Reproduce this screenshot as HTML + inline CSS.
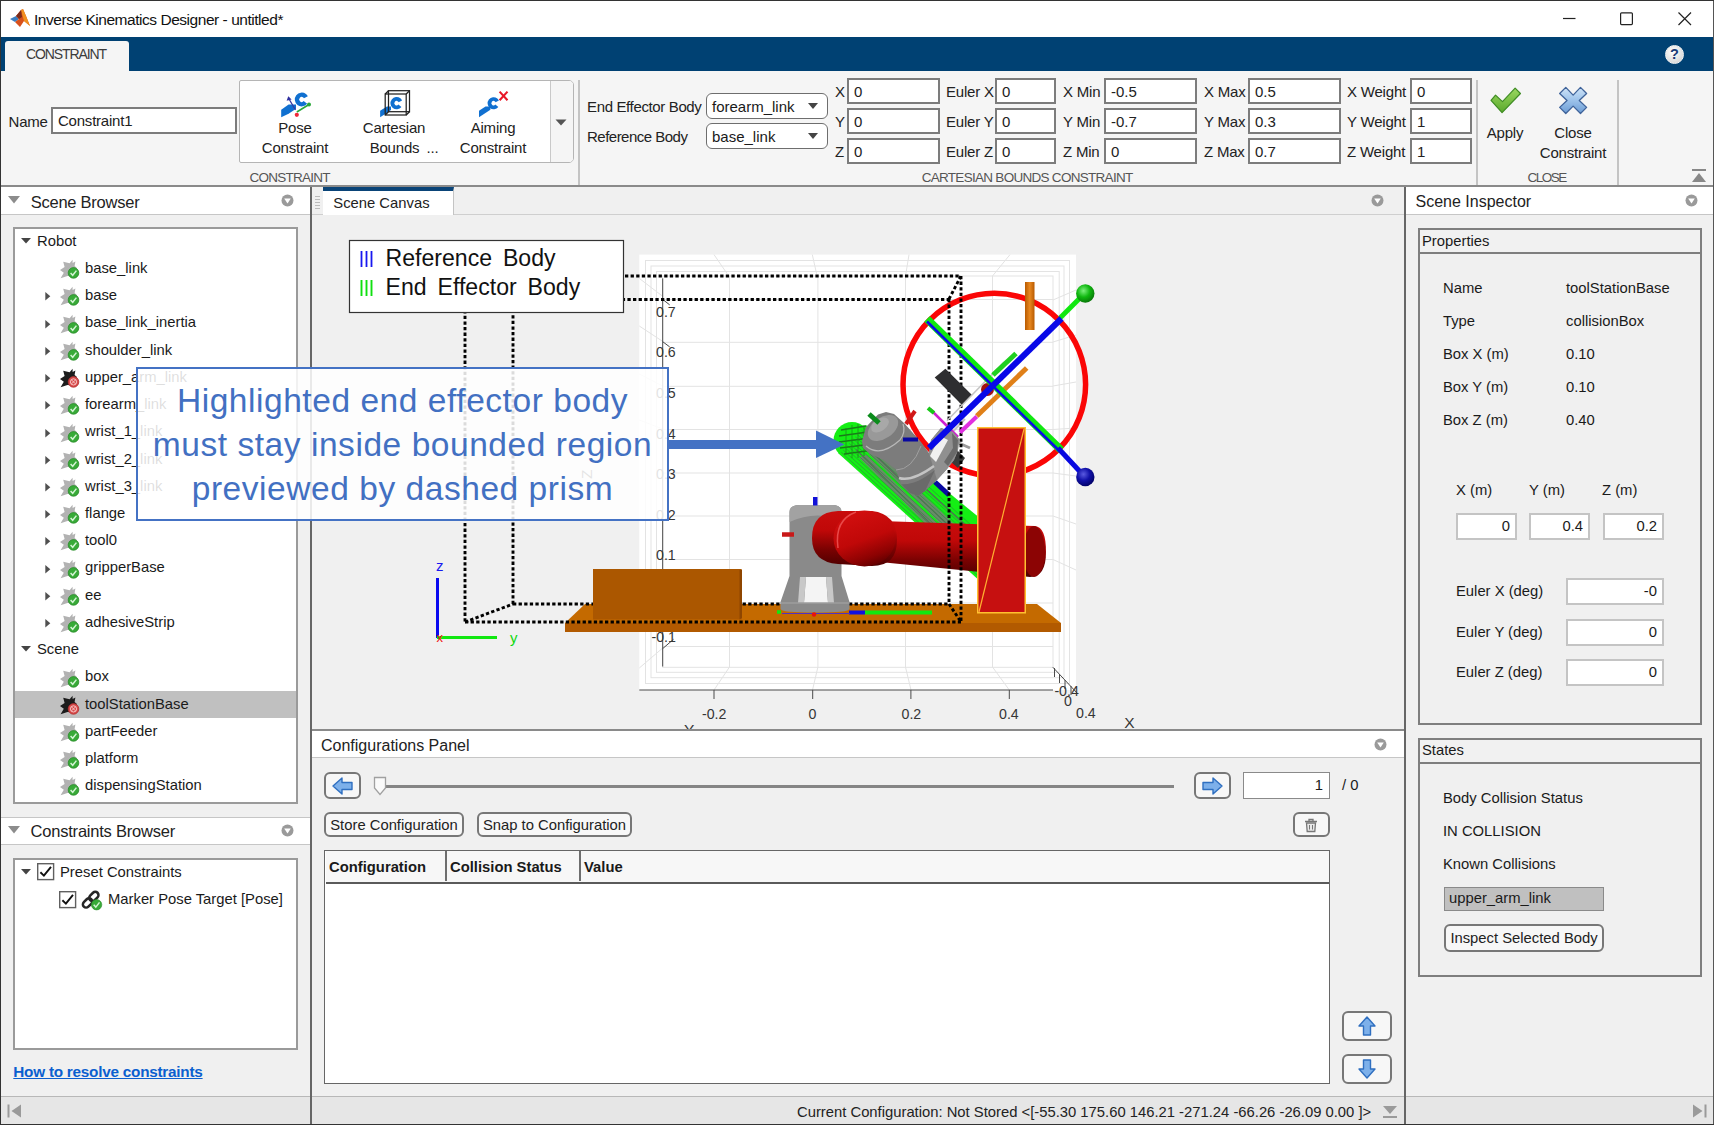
<!DOCTYPE html>
<html><head><meta charset="utf-8"><title>Inverse Kinematics Designer</title>
<style>
*{box-sizing:border-box;margin:0;padding:0}
html,body{width:1714px;height:1125px;overflow:hidden;background:#f0f0f0;font-family:"Liberation Sans",sans-serif;font-size:15px;color:#1a1a1a}
.a{position:absolute}
#win{position:absolute;left:0;top:0;width:1714px;height:1125px;background:#f0f0f0;overflow:hidden}
.ts{font-family:"Liberation Sans",sans-serif;font-size:15px;color:#222;letter-spacing:-0.2px;white-space:nowrap}
.in{position:absolute;background:#fff;border:2px solid #7c7c7c;height:26px;font-size:15px;line-height:23px;padding-left:5px;color:#222;white-space:nowrap;overflow:hidden}
.lb{position:absolute;font-size:15px;line-height:20px;color:#222;white-space:nowrap;letter-spacing:-0.2px}
.sec{position:absolute;font-size:13.5px;color:#555;letter-spacing:-0.2px;white-space:nowrap}
.dd{position:absolute;background:#fff;border:1.5px solid #6e6e6e;border-radius:6px;height:26px;font-size:15px;line-height:26px;padding-left:5px;white-space:nowrap}
.hdr{position:absolute;background:#fff;font-size:16px;line-height:24px;color:#222;white-space:nowrap}
.tree{position:absolute;background:#fff;border:2px solid #9a9a9a}
.ti{position:absolute;height:27px;font-size:14.8px;line-height:27px;white-space:nowrap}
.btn{position:absolute;background:#f7f7f7;border:2px solid #777;border-radius:6px;font-size:14.8px;text-align:center;white-space:nowrap;color:#222}
.pl{position:absolute;font-size:14.8px;line-height:18px;color:#1a1a1a;white-space:nowrap}
.pin{position:absolute;background:#fff;border:2px solid #c4c4c4;font-size:14.8px;text-align:right;padding-right:5px;color:#1a1a1a}
</style></head><body><div id="win">
<!-- TITLE BAR -->
<div class="a" style="left:0;top:0;width:1714px;height:37px;background:#fff"></div>
<div class="a" id="title" style="letter-spacing:-0.464px;left:34.0px;top:9.600px;font-size:15.5px;line-height:20px;color:#111;white-space:nowrap">Inverse Kinematics Designer - untitled*</div>
<!-- BLUE BAND -->
<div class="a" style="left:0;top:37px;width:1714px;height:35px;background:#004173"></div>
<div class="a" style="left:5px;top:41px;width:124px;height:31px;background:#f5f5f5;border-radius:3px 3px 0 0"></div>
<div class="a" id="tabc" style="letter-spacing:-1.100px;left:26.0px;top:44.800px;font-size:14px;line-height:18px;color:#3c3c3c;">CONSTRAINT</div>
<!-- TOOLSTRIP -->
<div class="a" style="left:0;top:71px;width:1714px;height:115px;background:#f5f5f5"></div>
<div class="a" style="left:0;top:185px;width:1714px;height:2px;background:#8a8a8a"></div>
<div id="toolstrip">
<div class="lb" style="left:8.500px;top:111.700px">Name</div>
<div class="in" style="letter-spacing:-0.220px;left:51px;top:107px;width:186px;height:27px;line-height:24px">Constraint1</div>
<!-- gallery -->
<div class="a" style="left:239px;top:80px;width:335px;height:83px;background:#fff;border:1.5px solid #b5b5b5;border-radius:2px 5px 5px 2px"></div>
<div class="a" style="left:550px;top:81px;width:23px;height:81px;background:#f5f5f5;border-left:1.5px solid #c9c9c9;border-radius:0 4px 4px 0"></div>
<svg class="a" style="left:555px;top:119px" width="12" height="7"><path d="M0.5 0.5 L11.5 0.5 L6 6.5 Z" fill="#555"/></svg>
<div class="lb gl" style="left:245px;top:118px;width:100px;text-align:center">Pose</div>
<div class="lb gl" style="left:245px;top:138px;width:100px;text-align:center">Constraint</div>
<div class="lb gl" style="left:344px;top:118px;width:100px;text-align:center">Cartesian</div>
<div class="lb gl" style="left:344.500px;top:138px;width:100px;text-align:center">Bounds</div><div class="lb" style="left:426.500px;top:138px">...</div>
<div class="lb gl" style="left:443px;top:118px;width:100px;text-align:center">Aiming</div>
<div class="lb gl" style="left:443px;top:138px;width:100px;text-align:center">Constraint</div>
<!-- gallery icons -->
<svg class="a" style="left:275px;top:86px" width="44" height="36" viewBox="275 86 44 36">
<path d="M281.200 109.800 L288.600 104.500 L296 104.500 L296 108.800 L288.600 113.800 L281.200 117.200 Z" fill="#1070d0"/>
<circle cx="301.7" cy="99.5" r="4.7" fill="none" stroke="#1070d0" stroke-width="4.4" stroke-dasharray="23.62 5.91" transform="rotate(38 301.7 99.5)"/>
<path d="M296.800 112 L309 104.500" stroke="#28a838" stroke-width="1.500"/><circle cx="309" cy="104.500" r="2" fill="#28a838"/>
<path d="M295.500 110 L289 99" stroke="#3838a0" stroke-width="1.300"/><path d="M286.600 100.800 L288.300 96.200 L291.600 99.600 Z" fill="#3030a0"/>
<circle cx="296.800" cy="114.800" r="2.100" fill="#f02838"/>
</svg>
<svg class="a" style="left:374px;top:86px" width="44" height="36" viewBox="374 86 44 36">
<path d="M380.100 110.800 L387 106.500 L391 106.500 L391 110 L386 113.500 L380.100 117.200 Z" fill="#1070d0"/>
<circle cx="396.6" cy="103.2" r="4.2" fill="none" stroke="#1070d0" stroke-width="3.9" stroke-dasharray="21.11 5.28" transform="rotate(38 396.6 103.2)"/>
<g fill="none" stroke="#222" stroke-width="1.250"><rect x="385.200" y="94" width="21" height="21"/><rect x="388.500" y="90.700" width="21" height="21"/><path d="M385.200 94 L388.500 90.700 M406.200 94 L409.500 90.700 M406.200 115 L409.500 111.700 M385.200 115 L388.500 111.700"/></g>
</svg>
<svg class="a" style="left:473px;top:86px" width="44" height="36" viewBox="473 86 44 36">
<path d="M479 110.800 L485.500 106.500 L490.400 106.500 L490.400 109.800 L484.700 113.500 L479 117.200 Z" fill="#1070d0"/>
<circle cx="493.6" cy="103.2" r="4.1" fill="none" stroke="#1070d0" stroke-width="3.8" stroke-dasharray="20.61 5.15" transform="rotate(38 493.6 103.2)"/>
<path d="M499.600 91.600 L507.500 100.300 M507.500 91.600 L499.600 100.300" stroke="#e81828" stroke-width="2.100"/>
</svg>
<div class="sec" style="letter-spacing:-0.745px;left:249.4px;top:170px">CONSTRAINT</div>
<div class="a" style="left:578px;top:80px;width:2px;height:105px;background:#c4c4c4"></div>
<!-- body selectors -->
<div class="lb" style="letter-spacing:-0.361px;left:587.0px;top:97px">End Effector Body</div>
<div class="lb" style="letter-spacing:-0.513px;left:587.0px;top:127px">Reference Body</div>
<div class="dd" style="left:706px;top:93px;width:122px">forearm_link</div>
<div class="dd" style="left:706px;top:123px;width:122px">base_link</div>
<svg class="a" style="left:808px;top:103px" width="10" height="6"><path d="M0 0 L10 0 L5 6 Z" fill="#444"/></svg>
<svg class="a" style="left:808px;top:133px" width="10" height="6"><path d="M0 0 L10 0 L5 6 Z" fill="#444"/></svg>
<div class="lb" style="left:835px;top:82px">X</div>
<div class="in" style="left:847px;top:77.7px;width:93px;height:26.600px">0</div>
<div class="lb" style="left:946px;top:82px">Euler X</div>
<div class="in" style="left:995px;top:77.7px;width:61px;height:26.600px">0</div>
<div class="lb" style="left:1063px;top:82px">X Min</div>
<div class="in" style="left:1104px;top:77.7px;width:93px;height:26.600px">-0.5</div>
<div class="lb" style="left:1204px;top:82px">X Max</div>
<div class="in" style="left:1248px;top:77.7px;width:93px;height:26.600px">0.5</div>
<div class="lb" style="left:1347px;top:82px">X Weight</div>
<div class="in" style="left:1410px;top:77.7px;width:62px;height:26.600px">0</div>
<div class="lb" style="left:835px;top:112px">Y</div>
<div class="in" style="left:847px;top:107.7px;width:93px;height:26.600px">0</div>
<div class="lb" style="left:946px;top:112px">Euler Y</div>
<div class="in" style="left:995px;top:107.7px;width:61px;height:26.600px">0</div>
<div class="lb" style="left:1063px;top:112px">Y Min</div>
<div class="in" style="left:1104px;top:107.7px;width:93px;height:26.600px">-0.7</div>
<div class="lb" style="left:1204px;top:112px">Y Max</div>
<div class="in" style="left:1248px;top:107.7px;width:93px;height:26.600px">0.3</div>
<div class="lb" style="left:1347px;top:112px">Y Weight</div>
<div class="in" style="left:1410px;top:107.7px;width:62px;height:26.600px">1</div>
<div class="lb" style="left:835px;top:142px">Z</div>
<div class="in" style="left:847px;top:137.7px;width:93px;height:26.600px">0</div>
<div class="lb" style="left:946px;top:142px">Euler Z</div>
<div class="in" style="left:995px;top:137.7px;width:61px;height:26.600px">0</div>
<div class="lb" style="left:1063px;top:142px">Z Min</div>
<div class="in" style="left:1104px;top:137.7px;width:93px;height:26.600px">0</div>
<div class="lb" style="left:1204px;top:142px">Z Max</div>
<div class="in" style="left:1248px;top:137.7px;width:93px;height:26.600px">0.7</div>
<div class="lb" style="left:1347px;top:142px">Z Weight</div>
<div class="in" style="left:1410px;top:137.7px;width:62px;height:26.600px">1</div>
<div class="sec" style="letter-spacing:-0.712px;left:921.7px;top:170px">CARTESIAN BOUNDS CONSTRAINT</div>
<div class="a" style="left:1476px;top:80px;width:2px;height:105px;background:#c4c4c4"></div>
<div class="a" style="left:1617px;top:80px;width:2px;height:105px;background:#c4c4c4"></div>
<div class="lb" style="left:1465px;top:123px;width:80px;text-align:center">Apply</div>
<div class="lb" style="left:1533px;top:123px;width:80px;text-align:center">Close</div>
<div class="lb" style="left:1533px;top:143px;width:80px;text-align:center">Constraint</div>
<div class="sec" style="letter-spacing:-1.516px;left:1527.6px;top:170px">CLOSE</div>
<svg class="a" style="left:1489px;top:87px" width="34" height="30" viewBox="0 0 34 30"><defs><linearGradient id="gCk" x1="0" x2="0" y1="0" y2="1"><stop offset="0" stop-color="#9ad860"/><stop offset="1" stop-color="#5aa82c"/></linearGradient></defs><path d="M2.03 13.42 L6.52 8.11 L13.47 14.65 L26.13 1.17 L31.44 6.48 L13.06 25.68 Z" fill="url(#gCk)" stroke="#3f8c24" stroke-width="1.200" stroke-linejoin="round"/></svg>
<svg class="a" style="left:1557px;top:86px" width="34" height="30" viewBox="0 0 34 30"><defs><linearGradient id="gXx" x1="0" x2="0" y1="0" y2="1"><stop offset="0" stop-color="#cfe4f8"/><stop offset="0.5" stop-color="#9cc2ea"/><stop offset="1" stop-color="#6c9cd4"/></linearGradient></defs><path d="M8.78 1.35 L16.14 9.11 L23.49 1.35 L29.62 7.48 L22.26 14.42 L29.62 21.37 L23.49 27.50 L16.14 20.14 L8.78 27.50 L2.66 21.37 L10.01 14.42 L2.66 7.48 Z" fill="url(#gXx)" stroke="#3f639a" stroke-width="1.300" stroke-linejoin="round"/></svg>
<svg class="a" style="left:1692px;top:169px" width="14" height="13" viewBox="0 0 14 13"><rect x="0" y="0" width="14" height="2" fill="#888"/><path d="M7 4 L14 13 L0 13 Z" fill="#888"/></svg>
<svg class="a" style="left:1560px;top:8px" width="140" height="22" viewBox="0 0 140 22"><path d="M3 10.500 L15.500 10.500" stroke="#222" stroke-width="1.200"/><rect x="60.600" y="4.800" width="11.800" height="11.800" rx="1" fill="none" stroke="#222" stroke-width="1.200"/><path d="M118.500 4.500 L131 17 M131 4.500 L118.500 17" stroke="#222" stroke-width="1.200"/></svg>
<div class="a" style="left:1665px;top:44.500px;width:19px;height:19px;border-radius:9.500px;background:radial-gradient(circle at 40% 35%,#fff,#dcdcdc 70%,#b8b8c8);border:1px solid #f4f4f4;color:#1a3c78;font-weight:bold;font-size:14.500px;line-height:17px;text-align:center">?</div>
<svg class="a" style="left:9px;top:8px" width="22" height="20" viewBox="0 0 22 20"><path d="M1 11 L7 8 L10 11 L6 14 Z" fill="#3a7cc0"/><path d="M7 8 L12 2 L14 1 L17 8 L21 18 L15 13 L11 19 L6 14 L10 11 Z" fill="#d8501c"/><path d="M12 2 L14 1 L17 8 L21 18 L15 13 Z" fill="#f09020"/><path d="M7 8 L12 2 L13 9 L10 11Z" fill="#7a2a1a"/></svg>
</div>
<!-- LEFT -->
<div id="left">
<div class="a" style="left:1px;top:187px;width:309px;height:910px;background:#f0f0f0"></div>
<div class="a" style="left:310.200px;top:187px;width:1.600px;height:938px;background:#666"></div>
<div class="hdr" style="left:1px;top:187px;width:309px;height:28px;border-bottom:1.5px solid #c6c6c6"></div>
<svg class="a" style="left:8px;top:196px" width="12" height="8"><path d="M0 0 L12 0 L6 7.500 Z" fill="#8c8c8c"/></svg>
<div class="a" id="sbh" style="letter-spacing:-0.245px;left:30.7px;top:191.600px;font-size:16.5px;line-height:20px;color:#222;white-space:nowrap">Scene Browser</div>
<svg class="a" style="left:281px;top:194px" width="13" height="13" viewBox="0 0 13 13"><circle cx="6.5" cy="6.5" r="6" fill="#9a9a9a"/><path d="M3.200 4.500 L9.800 4.500 L6.500 9.500 Z" fill="#fff"/></svg>
<div class="tree" style="left:13px;top:227px;width:285px;height:577px"></div>
<svg class="a" style="left:21px;top:238px" width="10" height="6"><path d="M0 0 L10 0 L5 5.500 Z" fill="#444"/></svg>
<div class="ti" style="left:37px;top:227.7px">Robot</div>
<svg class="a" style="left:59px;top:257px" width="22" height="22" viewBox="0 0 22 22"><path d="M13.600 2.800 L10.600 6.200 L4.200 4.800 L5.600 10 L1 13 L4.800 15.800 L1.600 21.200 L8.500 19 L14 19.500 L18 11 L15.600 9 L16.400 4.400 L13.600 6 Z" fill="#b2b2b2"/><circle cx="14.500" cy="15.900" r="5.300" fill="#38aa38" stroke="#2a8c2a" stroke-width="0.800"/><path d="M11.600 16 L13.700 18.300 L17.400 13.600" fill="none" stroke="#d4f4d4" stroke-width="1.500"/></svg>
<div class="ti" style="left:85px;top:254.9px">base_link</div>
<svg class="a" style="left:45px;top:291.5px" width="6" height="9"><path d="M0.300 0 L5.300 4.300 L0.300 8.600 Z" fill="#505050"/></svg>
<svg class="a" style="left:59px;top:284px" width="22" height="22" viewBox="0 0 22 22"><path d="M13.600 2.800 L10.600 6.200 L4.200 4.800 L5.600 10 L1 13 L4.800 15.800 L1.600 21.200 L8.500 19 L14 19.500 L18 11 L15.600 9 L16.400 4.400 L13.600 6 Z" fill="#b2b2b2"/><circle cx="14.500" cy="15.900" r="5.300" fill="#38aa38" stroke="#2a8c2a" stroke-width="0.800"/><path d="M11.600 16 L13.700 18.300 L17.400 13.600" fill="none" stroke="#d4f4d4" stroke-width="1.500"/></svg>
<div class="ti" style="left:85px;top:282.1px">base</div>
<svg class="a" style="left:45px;top:319.5px" width="6" height="9"><path d="M0.300 0 L5.300 4.300 L0.300 8.600 Z" fill="#505050"/></svg>
<svg class="a" style="left:59px;top:312px" width="22" height="22" viewBox="0 0 22 22"><path d="M13.600 2.800 L10.600 6.200 L4.200 4.800 L5.600 10 L1 13 L4.800 15.800 L1.600 21.200 L8.500 19 L14 19.500 L18 11 L15.600 9 L16.400 4.400 L13.600 6 Z" fill="#b2b2b2"/><circle cx="14.500" cy="15.900" r="5.300" fill="#38aa38" stroke="#2a8c2a" stroke-width="0.800"/><path d="M11.600 16 L13.700 18.300 L17.400 13.600" fill="none" stroke="#d4f4d4" stroke-width="1.500"/></svg>
<div class="ti" style="left:85px;top:309.4px">base_link_inertia</div>
<svg class="a" style="left:45px;top:346.5px" width="6" height="9"><path d="M0.300 0 L5.300 4.300 L0.300 8.600 Z" fill="#505050"/></svg>
<svg class="a" style="left:59px;top:339px" width="22" height="22" viewBox="0 0 22 22"><path d="M13.600 2.800 L10.600 6.200 L4.200 4.800 L5.600 10 L1 13 L4.800 15.800 L1.600 21.200 L8.500 19 L14 19.500 L18 11 L15.600 9 L16.400 4.400 L13.600 6 Z" fill="#b2b2b2"/><circle cx="14.500" cy="15.900" r="5.300" fill="#38aa38" stroke="#2a8c2a" stroke-width="0.800"/><path d="M11.600 16 L13.700 18.300 L17.400 13.600" fill="none" stroke="#d4f4d4" stroke-width="1.500"/></svg>
<div class="ti" style="left:85px;top:336.6px">shoulder_link</div>
<svg class="a" style="left:45px;top:373.5px" width="6" height="9"><path d="M0.300 0 L5.300 4.300 L0.300 8.600 Z" fill="#505050"/></svg>
<svg class="a" style="left:59px;top:366px" width="22" height="22" viewBox="0 0 22 22"><path d="M13.600 2.800 L10.600 6.200 L4.200 4.800 L5.600 10 L1 13 L4.800 15.800 L1.600 21.200 L8.500 19 L14 19.500 L18 11 L15.600 9 L16.400 4.400 L13.600 6 Z" fill="#1c1c1c"/><circle cx="14.500" cy="15.900" r="5.300" fill="#d84a4a" stroke="#b03030" stroke-width="0.800"/><circle cx="14.500" cy="15.900" r="3.100" fill="none" stroke="#f8d0d0" stroke-width="0.900"/><path d="M12.600 14 L16.400 17.800 M16.400 14 L12.600 17.800" stroke="#f8d0d0" stroke-width="0.900"/></svg>
<div class="ti" style="left:85px;top:363.8px">upper_arm_link</div>
<svg class="a" style="left:45px;top:400.5px" width="6" height="9"><path d="M0.300 0 L5.300 4.300 L0.300 8.600 Z" fill="#505050"/></svg>
<svg class="a" style="left:59px;top:393px" width="22" height="22" viewBox="0 0 22 22"><path d="M13.600 2.800 L10.600 6.200 L4.200 4.800 L5.600 10 L1 13 L4.800 15.800 L1.600 21.200 L8.500 19 L14 19.500 L18 11 L15.600 9 L16.400 4.400 L13.600 6 Z" fill="#b2b2b2"/><circle cx="14.500" cy="15.900" r="5.300" fill="#38aa38" stroke="#2a8c2a" stroke-width="0.800"/><path d="M11.600 16 L13.700 18.300 L17.400 13.600" fill="none" stroke="#d4f4d4" stroke-width="1.500"/></svg>
<div class="ti" style="left:85px;top:391.1px">forearm_link</div>
<svg class="a" style="left:45px;top:428.5px" width="6" height="9"><path d="M0.300 0 L5.300 4.300 L0.300 8.600 Z" fill="#505050"/></svg>
<svg class="a" style="left:59px;top:421px" width="22" height="22" viewBox="0 0 22 22"><path d="M13.600 2.800 L10.600 6.200 L4.200 4.800 L5.600 10 L1 13 L4.800 15.800 L1.600 21.200 L8.500 19 L14 19.500 L18 11 L15.600 9 L16.400 4.400 L13.600 6 Z" fill="#b2b2b2"/><circle cx="14.500" cy="15.900" r="5.300" fill="#38aa38" stroke="#2a8c2a" stroke-width="0.800"/><path d="M11.600 16 L13.700 18.300 L17.400 13.600" fill="none" stroke="#d4f4d4" stroke-width="1.500"/></svg>
<div class="ti" style="left:85px;top:418.3px">wrist_1_link</div>
<svg class="a" style="left:45px;top:455.5px" width="6" height="9"><path d="M0.300 0 L5.300 4.300 L0.300 8.600 Z" fill="#505050"/></svg>
<svg class="a" style="left:59px;top:448px" width="22" height="22" viewBox="0 0 22 22"><path d="M13.600 2.800 L10.600 6.200 L4.200 4.800 L5.600 10 L1 13 L4.800 15.800 L1.600 21.200 L8.500 19 L14 19.500 L18 11 L15.600 9 L16.400 4.400 L13.600 6 Z" fill="#b2b2b2"/><circle cx="14.500" cy="15.900" r="5.300" fill="#38aa38" stroke="#2a8c2a" stroke-width="0.800"/><path d="M11.600 16 L13.700 18.300 L17.400 13.600" fill="none" stroke="#d4f4d4" stroke-width="1.500"/></svg>
<div class="ti" style="left:85px;top:445.5px">wrist_2_link</div>
<svg class="a" style="left:45px;top:482.5px" width="6" height="9"><path d="M0.300 0 L5.300 4.300 L0.300 8.600 Z" fill="#505050"/></svg>
<svg class="a" style="left:59px;top:475px" width="22" height="22" viewBox="0 0 22 22"><path d="M13.600 2.800 L10.600 6.200 L4.200 4.800 L5.600 10 L1 13 L4.800 15.800 L1.600 21.200 L8.500 19 L14 19.500 L18 11 L15.600 9 L16.400 4.400 L13.600 6 Z" fill="#b2b2b2"/><circle cx="14.500" cy="15.900" r="5.300" fill="#38aa38" stroke="#2a8c2a" stroke-width="0.800"/><path d="M11.600 16 L13.700 18.300 L17.400 13.600" fill="none" stroke="#d4f4d4" stroke-width="1.500"/></svg>
<div class="ti" style="left:85px;top:472.7px">wrist_3_link</div>
<svg class="a" style="left:45px;top:509.5px" width="6" height="9"><path d="M0.300 0 L5.300 4.300 L0.300 8.600 Z" fill="#505050"/></svg>
<svg class="a" style="left:59px;top:502px" width="22" height="22" viewBox="0 0 22 22"><path d="M13.600 2.800 L10.600 6.200 L4.200 4.800 L5.600 10 L1 13 L4.800 15.800 L1.600 21.200 L8.500 19 L14 19.500 L18 11 L15.600 9 L16.400 4.400 L13.600 6 Z" fill="#b2b2b2"/><circle cx="14.500" cy="15.900" r="5.300" fill="#38aa38" stroke="#2a8c2a" stroke-width="0.800"/><path d="M11.600 16 L13.700 18.300 L17.400 13.600" fill="none" stroke="#d4f4d4" stroke-width="1.500"/></svg>
<div class="ti" style="left:85px;top:500px">flange</div>
<svg class="a" style="left:45px;top:536.5px" width="6" height="9"><path d="M0.300 0 L5.300 4.300 L0.300 8.600 Z" fill="#505050"/></svg>
<svg class="a" style="left:59px;top:529px" width="22" height="22" viewBox="0 0 22 22"><path d="M13.600 2.800 L10.600 6.200 L4.200 4.800 L5.600 10 L1 13 L4.800 15.800 L1.600 21.200 L8.500 19 L14 19.500 L18 11 L15.600 9 L16.400 4.400 L13.600 6 Z" fill="#b2b2b2"/><circle cx="14.500" cy="15.900" r="5.300" fill="#38aa38" stroke="#2a8c2a" stroke-width="0.800"/><path d="M11.600 16 L13.700 18.300 L17.400 13.600" fill="none" stroke="#d4f4d4" stroke-width="1.500"/></svg>
<div class="ti" style="left:85px;top:527.2px">tool0</div>
<svg class="a" style="left:45px;top:564.5px" width="6" height="9"><path d="M0.300 0 L5.300 4.300 L0.300 8.600 Z" fill="#505050"/></svg>
<svg class="a" style="left:59px;top:557px" width="22" height="22" viewBox="0 0 22 22"><path d="M13.600 2.800 L10.600 6.200 L4.200 4.800 L5.600 10 L1 13 L4.800 15.800 L1.600 21.200 L8.500 19 L14 19.500 L18 11 L15.600 9 L16.400 4.400 L13.600 6 Z" fill="#b2b2b2"/><circle cx="14.500" cy="15.900" r="5.300" fill="#38aa38" stroke="#2a8c2a" stroke-width="0.800"/><path d="M11.600 16 L13.700 18.300 L17.400 13.600" fill="none" stroke="#d4f4d4" stroke-width="1.500"/></svg>
<div class="ti" style="left:85px;top:554.4px">gripperBase</div>
<svg class="a" style="left:45px;top:591.5px" width="6" height="9"><path d="M0.300 0 L5.300 4.300 L0.300 8.600 Z" fill="#505050"/></svg>
<svg class="a" style="left:59px;top:584px" width="22" height="22" viewBox="0 0 22 22"><path d="M13.600 2.800 L10.600 6.200 L4.200 4.800 L5.600 10 L1 13 L4.800 15.800 L1.600 21.200 L8.500 19 L14 19.500 L18 11 L15.600 9 L16.400 4.400 L13.600 6 Z" fill="#b2b2b2"/><circle cx="14.500" cy="15.900" r="5.300" fill="#38aa38" stroke="#2a8c2a" stroke-width="0.800"/><path d="M11.600 16 L13.700 18.300 L17.400 13.600" fill="none" stroke="#d4f4d4" stroke-width="1.500"/></svg>
<div class="ti" style="left:85px;top:581.6px">ee</div>
<svg class="a" style="left:45px;top:618.5px" width="6" height="9"><path d="M0.300 0 L5.300 4.300 L0.300 8.600 Z" fill="#505050"/></svg>
<svg class="a" style="left:59px;top:611px" width="22" height="22" viewBox="0 0 22 22"><path d="M13.600 2.800 L10.600 6.200 L4.200 4.800 L5.600 10 L1 13 L4.800 15.800 L1.600 21.200 L8.500 19 L14 19.500 L18 11 L15.600 9 L16.400 4.400 L13.600 6 Z" fill="#b2b2b2"/><circle cx="14.500" cy="15.900" r="5.300" fill="#38aa38" stroke="#2a8c2a" stroke-width="0.800"/><path d="M11.600 16 L13.700 18.300 L17.400 13.600" fill="none" stroke="#d4f4d4" stroke-width="1.500"/></svg>
<div class="ti" style="left:85px;top:608.9px">adhesiveStrip</div>
<svg class="a" style="left:21px;top:646px" width="10" height="6"><path d="M0 0 L10 0 L5 5.500 Z" fill="#444"/></svg>
<div class="ti" style="left:37px;top:636.1px">Scene</div>
<svg class="a" style="left:59px;top:666px" width="22" height="22" viewBox="0 0 22 22"><path d="M13.600 2.800 L10.600 6.200 L4.200 4.800 L5.600 10 L1 13 L4.800 15.800 L1.600 21.200 L8.500 19 L14 19.500 L18 11 L15.600 9 L16.400 4.400 L13.600 6 Z" fill="#b2b2b2"/><circle cx="14.500" cy="15.900" r="5.300" fill="#38aa38" stroke="#2a8c2a" stroke-width="0.800"/><path d="M11.600 16 L13.700 18.300 L17.400 13.600" fill="none" stroke="#d4f4d4" stroke-width="1.500"/></svg>
<div class="ti" style="left:85px;top:663.3px">box</div>
<div class="a" style="left:15px;top:691px;width:281px;height:27px;background:#c0c0c0"></div>
<svg class="a" style="left:59px;top:693px" width="22" height="22" viewBox="0 0 22 22"><path d="M13.600 2.800 L10.600 6.200 L4.200 4.800 L5.600 10 L1 13 L4.800 15.800 L1.600 21.200 L8.500 19 L14 19.500 L18 11 L15.600 9 L16.400 4.400 L13.600 6 Z" fill="#1c1c1c"/><circle cx="14.500" cy="15.900" r="5.300" fill="#d84a4a" stroke="#b03030" stroke-width="0.800"/><circle cx="14.500" cy="15.900" r="3.100" fill="none" stroke="#f8d0d0" stroke-width="0.900"/><path d="M12.600 14 L16.400 17.800 M16.400 14 L12.600 17.800" stroke="#f8d0d0" stroke-width="0.900"/></svg>
<div class="ti" style="left:85px;top:690.5px">toolStationBase</div>
<svg class="a" style="left:59px;top:720px" width="22" height="22" viewBox="0 0 22 22"><path d="M13.600 2.800 L10.600 6.200 L4.200 4.800 L5.600 10 L1 13 L4.800 15.800 L1.600 21.200 L8.500 19 L14 19.500 L18 11 L15.600 9 L16.400 4.400 L13.600 6 Z" fill="#b2b2b2"/><circle cx="14.500" cy="15.900" r="5.300" fill="#38aa38" stroke="#2a8c2a" stroke-width="0.800"/><path d="M11.600 16 L13.700 18.300 L17.400 13.600" fill="none" stroke="#d4f4d4" stroke-width="1.500"/></svg>
<div class="ti" style="left:85px;top:717.7px">partFeeder</div>
<svg class="a" style="left:59px;top:747px" width="22" height="22" viewBox="0 0 22 22"><path d="M13.600 2.800 L10.600 6.200 L4.200 4.800 L5.600 10 L1 13 L4.800 15.800 L1.600 21.200 L8.500 19 L14 19.500 L18 11 L15.600 9 L16.400 4.400 L13.600 6 Z" fill="#b2b2b2"/><circle cx="14.500" cy="15.900" r="5.300" fill="#38aa38" stroke="#2a8c2a" stroke-width="0.800"/><path d="M11.600 16 L13.700 18.300 L17.400 13.600" fill="none" stroke="#d4f4d4" stroke-width="1.500"/></svg>
<div class="ti" style="left:85px;top:745px">platform</div>
<svg class="a" style="left:59px;top:774px" width="22" height="22" viewBox="0 0 22 22"><path d="M13.600 2.800 L10.600 6.200 L4.200 4.800 L5.600 10 L1 13 L4.800 15.800 L1.600 21.200 L8.500 19 L14 19.500 L18 11 L15.600 9 L16.400 4.400 L13.600 6 Z" fill="#b2b2b2"/><circle cx="14.500" cy="15.900" r="5.300" fill="#38aa38" stroke="#2a8c2a" stroke-width="0.800"/><path d="M11.600 16 L13.700 18.300 L17.400 13.600" fill="none" stroke="#d4f4d4" stroke-width="1.500"/></svg>
<div class="ti" style="left:85px;top:772.2px">dispensingStation</div>
<div class="hdr" style="left:1px;top:817px;width:309px;height:28px;border-top:1.5px solid #c6c6c6;border-bottom:1.5px solid #c6c6c6"></div>
<svg class="a" style="left:8px;top:826px" width="12" height="8"><path d="M0 0 L12 0 L6 7.500 Z" fill="#8c8c8c"/></svg>
<div class="a" id="cbh" style="letter-spacing:-0.219px;left:30.6px;top:821px;font-size:16.5px;line-height:20px;color:#222;white-space:nowrap">Constraints Browser</div>
<svg class="a" style="left:281px;top:824px" width="13" height="13" viewBox="0 0 13 13"><circle cx="6.5" cy="6.5" r="6" fill="#9a9a9a"/><path d="M3.200 4.500 L9.800 4.500 L6.500 9.500 Z" fill="#fff"/></svg>
<div class="tree" style="left:13px;top:858px;width:285px;height:192px"></div>
<svg class="a" style="left:21px;top:869px" width="10" height="6"><path d="M0 0 L10 0 L5 5.500 Z" fill="#444"/></svg>
<svg class="a" style="left:37px;top:863.3px" width="18" height="18" viewBox="0 0 18 18"><rect x="0.700" y="0.700" width="15.900" height="15.900" fill="#fff" stroke="#606060" stroke-width="1.400"/><path d="M3.400 9.200 L6.900 12.600 L14 3.800" fill="none" stroke="#111" stroke-width="1.900"/></svg>
<div class="ti" style="left:60px;top:858.7px">Preset Constraints</div>
<svg class="a" style="left:59px;top:890.8px" width="18" height="18" viewBox="0 0 18 18"><rect x="0.700" y="0.700" width="15.900" height="15.900" fill="#fff" stroke="#606060" stroke-width="1.400"/><path d="M3.400 9.200 L6.900 12.600 L14 3.800" fill="none" stroke="#111" stroke-width="1.900"/></svg>
<svg class="a" style="left:81px;top:888px" width="24" height="24" viewBox="0 0 24 24"><g fill="none" stroke="#262626" stroke-width="2.500"><rect x="1.300" y="11.800" width="10.500" height="6.400" rx="3.200" transform="rotate(-45 6.500 15)"/><rect x="7.600" y="5.300" width="10.500" height="6.400" rx="3.200" transform="rotate(-45 12.800 8.500)"/></g><circle cx="15.600" cy="16.700" r="5.200" fill="#38aa38" stroke="#2a8c2a" stroke-width="0.600"/><path d="M12.700 16.800 L14.800 19.100 L18.500 14.400" fill="none" stroke="#d4f4d4" stroke-width="1.500"/></svg>
<div class="ti" style="left:108px;top:885.7px">Marker Pose Target [Pose]</div>
<div class="a" id="lnk" style="letter-spacing:-0.239px;left:13.3px;top:1062px;font-size:15.3px;line-height:20px;font-weight:bold;color:#0b5fcf;text-decoration:underline;white-space:nowrap">How to resolve constraints</div>
<div class="a" style="left:1px;top:1096px;width:1713px;height:29px;background:#e6e6e6;border-top:1.5px solid #b8b8b8"></div>
<svg class="a" style="left:7px;top:1104px" width="15" height="14" viewBox="0 0 15 14"><rect x="0.5" y="0.5" width="2" height="13" fill="#9a9a9a"/><path d="M14 0.5 L14 13.500 L4.500 7 Z" fill="#9a9a9a"/></svg>
<svg class="a" style="left:1692px;top:1104px" width="15" height="14" viewBox="0 0 15 14"><rect x="12.5" y="0.5" width="2" height="13" fill="#9a9a9a"/><path d="M1 0.5 L1 13.500 L10.500 7 Z" fill="#9a9a9a"/></svg>
</div>
<!-- CENTER -->
<div id="center">
<div class="a" style="left:312px;top:187px;width:1093px;height:28px;background:#f0f0f0;border-bottom:1.5px solid #cfcfcf"></div>
<div class="a" style="left:323px;top:187px;width:131px;height:28px;background:#fff;border-top:4px solid #0a4478;border-right:1.5px solid #c4c4c4"></div>
<svg class="a" style="left:315px;top:195px" width="6" height="16"><path d="M0 1.500 H5 M0 4.500 H5 M0 7.500 H5 M0 10.500 H5 M0 13.500 H5" stroke="#bbb" stroke-width="1"/></svg>
<div class="a" id="sct" style="left:333.300px;top:193.300px;font-size:14.800px;line-height:20px;color:#222;white-space:nowrap">Scene Canvas</div>
<svg class="a" style="left:1371px;top:194px" width="13" height="13" viewBox="0 0 13 13"><circle cx="6.5" cy="6.5" r="6" fill="#9a9a9a"/><path d="M3.200 4.500 L9.800 4.500 L6.500 9.500 Z" fill="#fff"/></svg>
<div id="scene"><!--SCENE_START--><svg class="a" style="left:312px;top:216px" width="1092" height="513" viewBox="312 216 1092 513" font-family="Liberation Sans, sans-serif">
<defs>
<linearGradient id="gBase" x1="0" x2="1" y1="0" y2="0"><stop offset="0" stop-color="#7a7a7a"/><stop offset="0.35" stop-color="#d8d8d8"/><stop offset="0.6" stop-color="#a0a0a0"/><stop offset="1" stop-color="#6e6e6e"/></linearGradient>
<linearGradient id="gArm" x1="0" x2="0" y1="0" y2="1"><stop offset="0" stop-color="#c80c0c"/><stop offset="0.35" stop-color="#c00808"/><stop offset="0.7" stop-color="#7a0202"/><stop offset="1" stop-color="#4e0000"/></linearGradient>
<linearGradient id="gSh" x1="0.2" x2="0.6" y1="0" y2="1"><stop offset="0" stop-color="#d41010"/><stop offset="0.55" stop-color="#c00808"/><stop offset="0.85" stop-color="#8c0202"/><stop offset="1" stop-color="#640000"/></linearGradient>
<linearGradient id="gWr" x1="0" x2="1" y1="0" y2="1"><stop offset="0" stop-color="#a8a8a8"/><stop offset="0.5" stop-color="#8a8a8a"/><stop offset="1" stop-color="#5e5e5e"/></linearGradient>
<radialGradient id="gGs" cx="0.4" cy="0.35" r="0.7"><stop offset="0" stop-color="#7cf07c"/><stop offset="0.5" stop-color="#10b810"/><stop offset="1" stop-color="#087008"/></radialGradient>
<radialGradient id="gBs" cx="0.4" cy="0.35" r="0.7"><stop offset="0" stop-color="#5a5ae0"/><stop offset="0.5" stop-color="#1010a8"/><stop offset="1" stop-color="#000060"/></radialGradient>
<linearGradient id="gOr" x1="0" x2="1" y1="0" y2="0"><stop offset="0" stop-color="#b85a00"/><stop offset="0.5" stop-color="#e88820"/><stop offset="1" stop-color="#b85a00"/></linearGradient>
</defs>
<!-- plot white region -->
<rect x="639.300" y="254.600" width="436.700" height="435.400" fill="#fff"/>
<g fill="none" stroke="#e3e3e3" stroke-width="1">
<rect x="645.500" y="260.500" width="424" height="423"/><rect x="651" y="266" width="413" height="411.700"/><rect x="656.500" y="271.500" width="402.700" height="400.800"/>
<rect x="662.700" y="276" width="390.300" height="391.300"/>
<path d="M729.500 276 V667 M817.900 276 V667 M905.500 276 V667 M992.500 276 V667"/>
<path d="M663 299.500 H1053 M663 342.300 H1053 M663 386.300 H1053 M663 429.500 H1053 M663 473 H1053 M663 516 H1053 M663 559.500 H1053 M663 603 H1053 M663 646.500 H1053"/>
<path d="M639.300 278.400 L662.700 296.300 M639.300 326 L662.700 341.400 M639.300 374 L662.700 386 M639.300 420 L662.700 429 M639.300 668 L662.700 648 M714 254.600 L727.200 273.800 M812.300 254.600 L816.600 273.800 M909 254.600 L905.500 276 M1010 254.600 L992.500 276 M1076 290 L1053 300 M1076 335 L1053 342 M1076 382 L1053 386 M1076 428 L1053 429.500 M1076 476 L1053 473 M1076 524 L1053 516 M1076 570 L1053 559.500 M729.500 667 L714 690 M817.900 667 L812.500 690 M905.500 667 L911 690 M992.500 667 L1009.300 690"/>
</g>
<!-- axes lines -->
<path d="M662.700 278.400 V666.500 M639.300 690 H1053 M714 690 V699 M812.700 690 V699 M910.900 690 V699 M1009.300 690 V699 M662.700 299.400 L669.700 304.900 M662.700 341.700 L669.700 346.900 M662.700 648.600 L673.500 639.300 M1052.800 667.200 L1077.600 693.600 M1054.500 668 V677 M1059.500 674 V683 M1065 680 V689 M1071 686 V695" stroke="#4a4a4a" stroke-width="1" fill="none"/>
<g font-size="14.200" fill="#363636">
<text x="656" y="316.500">0.7</text><text x="656" y="357">0.6</text><text x="656" y="397.500">0.5</text><text x="656" y="438.500">0.4</text><text x="656" y="479">0.3</text><text x="656" y="519.500">0.2</text><text x="656" y="560">0.1</text><text x="651.500" y="641.600">-0.1</text>
<text x="702" y="719">-0.2</text><text x="808.500" y="719">0</text><text x="901.500" y="719">0.2</text><text x="999" y="719">0.4</text><text x="1076" y="718.400">0.4</text><text x="1054.400" y="696">-0.4</text><text x="1064" y="706.400">0</text>
<text x="1124.300" y="728" font-size="15.500">X</text><text x="684" y="735" font-size="15.500">Y</text>
</g>
<text x="592" y="479" font-size="15.500" fill="#444" transform="rotate(-90 592 479)">Z</text>
<!-- platform -->
<path d="M585 604 L1037 604 L1061 623 L565 623 Z" fill="#c46a00"/>
<path d="M565 623 H1061 V632 H565 Z" fill="#b25a00"/>
<!-- prism dotted back -->
<g fill="none" stroke="#000" stroke-width="2.900" stroke-dasharray="3.300 2.300">
<path d="M465 299.500 H949 M513 276 H961 M949 299 L961 276 M465 299 V622 M513 276 V604 M465 622 L513 604 M513 604 H949 M949 604 L961 622"/>
</g>
<!-- part feeder -->
<path d="M593 569 H741.700 V619.500 H593 Z" fill="#ab5700"/><path d="M739.500 570 H742 V618 L739.500 619.500 Z" fill="#8f4600"/>
<!-- red circle -->
<circle cx="994.300" cy="384.500" r="91.300" fill="none" stroke="#fa0606" stroke-width="5.500"/>
<!-- green forearm band -->
<g>
<path d="M838 453 L866 425 L992 528 L992 592 Z" fill="#14ee14"/>
<circle cx="852" cy="440.500" r="18.500" fill="#14ee14"/>
<path d="M858 458 L975 572 L990 560 L880 450 Z" fill="#6a8a6a"/>
<path d="M852 452 L962 562 M860 447 L972 556 M868 442 L982 548 M875 436 L990 540" stroke="#14ee14" stroke-width="2.200" fill="none"/>
<path d="M856 449.500 L966 559 M864 444.500 L976 552 M871 439 L986 544" stroke="#5a6a5a" stroke-width="1.200" fill="none"/>
<path d="M863.4 427.9 L1004.5 555.2 M861.4 430.1 L1002.4 557.4 M859.4 432.3 L1000.4 559.6 M857.4 434.6 L998.4 561.8 M855.3 436.8 L996.4 564.1 M853.3 439.0 L994.4 566.3 M851.3 441.2 L992.4 568.5 M849.3 443.5 L990.4 570.7 M847.3 445.7 L988.4 573.0 M845.3 447.9 L986.4 575.2 M843.3 450.2 L984.4 577.4 M841.3 452.4 L982.3 579.7" stroke="#2f8f3f" stroke-width="0.900" fill="none" opacity="0.750"/>
<path d="M841 430 L866 426 M839 436 L868 432 M839 442 L870 438 M840 448 L872 444 M844 454 L874 450" stroke="#1a7a1a" stroke-width="1.300"/>
<path d="M846 428 V455 M852 425 V458 M858 424 V458 M864 425 V456" stroke="#1a8a1a" stroke-width="0.800"/>
</g>
<!-- small marks on wrist -->
<path d="M935 482 L949 495" stroke="#0808a0" stroke-width="5"/>
<path d="M906 424 L915 411" stroke="#d01818" stroke-width="4"/>
<path d="M940 445 L965 419" stroke="#c4c4c4" stroke-width="2"/>
<path d="M930 409 L958 437" stroke="#d020d0" stroke-width="2.500"/><path d="M928 408 L934 413" stroke="#18c818" stroke-width="4"/>
<path d="M952 440 L970 448" stroke="#9a9a9a" stroke-width="3"/>
<path d="M957 450 L965 458 L958 468 L951 462Z" fill="#3a3a3a"/>
<!-- gray wrist -->
<path d="M862 441 L866 427 L878 414.500 L886 412 L894 414 L904 423 L921 442 L929 453 L931 440 L941 428 L953 432 L959 439 L958 450 L954 460 L947 469 L937 480 L925 491 L918 496 L910 493 L901 484 L896 470 L884 460 L870 454 L863 448 Z" fill="#7c7c7c"/>
<path d="M929 453 L931 440 L941 428 L953 432 L959 439 L958 450 L954 460 L947 469 L937 480 Z" fill="#909090"/>
<path d="M940 436 L948 440 L936 462 L930 456 Z" fill="#f0f0f0"/>
<path d="M952 433 L958 440 L957 452 L948 466 L944 462 L953 448 Z" fill="#6a6a6a"/>
<ellipse cx="883" cy="428" rx="17" ry="10.500" transform="rotate(-35 883 428)" fill="#999"/>
<ellipse cx="880" cy="425" rx="10" ry="6" transform="rotate(-35 880 425)" fill="#a8a8a8"/>
<path d="M866 446 Q880 458 900 440 Q906 432 903 424" fill="none" stroke="#b8b8b8" stroke-width="1.200"/>
<path d="M896 470 Q912 470 921 446" fill="none" stroke="#a0a0a0" stroke-width="1"/>
<path d="M901 484 Q915 486 935 470 L925 491 L918 496 L910 493 Z" fill="#6a6a6a"/>
<path d="M899 478 Q912 482 934 466" fill="none" stroke="#c4c4c4" stroke-width="2.500"/>
<path d="M869 414 L879 423" stroke="#0c8c1c" stroke-width="5"/>
<path d="M903 439.500 L918 439.500" stroke="#0808a0" stroke-width="4"/>
<!-- robot base -->
<path d="M789.500 512 Q789.500 505 800 505 L832 505 Q841.500 505 841.500 512 L841.500 576 L849.500 602 L849.500 609 Q849 612.500 815 612.500 Q781 612.500 780.500 609 L780.500 602 L789.500 576 Z" fill="#8a8a8a"/>
<path d="M789.500 512 Q789.500 505 800 505 L832 505 Q841.500 505 841.500 512 L841.500 520 Q815 510 789.500 522 Z" fill="#a2a2a2"/>
<path d="M806 577 L826 577 L828 603 L804 603 Z" fill="#f4f4f4"/><path d="M800 577 L806 577 L804 603 L798 603Z M826 577 L832 577 L834 603 L828 603Z" fill="#c8c8c8"/>
<path d="M780.500 603 H849.500" stroke="#9c9c9c" stroke-width="1.500"/>
<rect x="813" y="497" width="4.500" height="8.500" fill="#1010d8"/>
<path d="M782 534.500 L794 534.500" stroke="#c81818" stroke-width="4.500"/>
<!-- red arm -->
<path d="M880 521 L1035 526 Q1046 527 1046 552 Q1046 577 1030 577 L880 562 Z" fill="url(#gArm)"/>
<ellipse cx="1034" cy="551.500" rx="11" ry="25.500" fill="#8c0404"/>
<path d="M812 538 Q812 512 838 511 L872 511 Q897 514 897 540 Q897 566 872 566 L838 564 Q812 562 812 538 Z" fill="url(#gArm)"/>
<ellipse cx="864.500" cy="538.500" rx="31" ry="28" fill="url(#gSh)"/>
<path d="M838 548 Q834 520 856 512" fill="none" stroke="#e84a4a" stroke-width="1.500"/>
<!-- prism front on top -->
<g fill="none" stroke="#000" stroke-width="2.900" stroke-dasharray="3.300 2.300">
<path d="M961 276 V622 M465 622 H961"/><path d="M949 470 V604"/><path d="M949 299 V425"/>
</g>
<!-- black box -->
<path d="M934.700 377.600 L945.400 368.800 L972 395 L962 405 Z" fill="#2e2e30"/>
<path d="M947 420.700 L1004 362" stroke="#c4c4c4" stroke-width="1.500"/>
<!-- orange -->
<rect x="1025" y="282" width="9.500" height="48" fill="url(#gOr)"/>
<path d="M976.800 416 L1026.700 368" stroke="#e08018" stroke-width="5"/>
<path d="M960 432.500 L976.800 416.500" stroke="#e030e0" stroke-width="4"/>
<circle cx="987.500" cy="389.500" r="6.500" fill="#a01010"/>
<!-- marker axes -->
<path d="M927 319 L1061 450" stroke="#10e810" stroke-width="8"/>
<path d="M927 321.500 L1060 451.500" stroke="#0a0ae8" stroke-width="2.600"/>
<path d="M1058 448 L1085 477" stroke="#0808e0" stroke-width="5"/>
<path d="M1060 318 L1085 293" stroke="#10e810" stroke-width="5"/>
<path d="M993 375 L1016 353.500" stroke="#20d020" stroke-width="5"/>
<path d="M929 448 L1061.500 318.500" stroke="#0808e8" stroke-width="6"/>
<circle cx="1085.300" cy="293.500" r="9.200" fill="url(#gGs)"/>
<circle cx="1085.300" cy="477" r="9.200" fill="url(#gBs)"/>
<!-- tool station -->
<rect x="977.750" y="427.750" width="47.500" height="185" fill="#c61010" stroke="#ffc030" stroke-width="1.500"/>
<path d="M979 612 L1024 429" stroke="#ffb030" stroke-width="1.200"/>
<!-- base frame marks -->
<path d="M864 612.500 H932" stroke="#10e810" stroke-width="4"/><path d="M849 612.500 H865" stroke="#1010e0" stroke-width="4"/><path d="M782 613.500 H850" stroke="#5030c0" stroke-width="1"/><circle cx="814" cy="614.500" r="2.200" fill="#e81010"/>
<path d="M777 612 H781" stroke="#10e810" stroke-width="3.500"/>
<!-- triad -->
<path d="M437.500 578 V638" stroke="#0a0af0" stroke-width="3"/><path d="M437 637.500 H497" stroke="#10e810" stroke-width="3"/>
<text x="436" y="571" font-size="15" fill="#1818f0">z</text><text x="510" y="643" font-size="15" fill="#10d810">y</text><text x="436.500" y="642" font-size="13" fill="#f01010">x</text>
<!-- legend -->
<rect x="349.500" y="240.500" width="274" height="72" fill="#fff" stroke="#333" stroke-width="1.200"/>
<path d="M361.500 251 V267 M366.500 251 V267 M371.500 251 V267" stroke="#1818f0" stroke-width="1.800"/>
<path d="M361.500 280 V296 M366.500 280 V296 M371.500 280 V296" stroke="#10e010" stroke-width="1.900"/>
<text x="385.500" y="266" font-size="23.100" fill="#111" word-spacing="4.500">Reference Body</text>
<text x="385.500" y="295" font-size="23.100" fill="#111" word-spacing="4.500">End Effector Body</text>
</svg></div>
<!--SCENE_END-->
<div class="a" style="left:312px;top:729px;width:1093px;height:2px;background:#8a8a8a"></div>
<div class="hdr" style="left:312px;top:731px;width:1093px;height:27px;border-bottom:1.5px solid #c6c6c6"></div>
<div class="a" id="cph" style="left:321px;top:736px;font-size:16px;line-height:20px;color:#222;white-space:nowrap">Configurations Panel</div>
<svg class="a" style="left:1374px;top:738px" width="13" height="13" viewBox="0 0 13 13"><circle cx="6.5" cy="6.5" r="6" fill="#9a9a9a"/><path d="M3.200 4.500 L9.800 4.500 L6.500 9.500 Z" fill="#fff"/></svg>
<div class="btn" style="left:324px;top:772px;width:37px;height:27px"><svg width="21" height="18" viewBox="0 0 21 18" style="position:absolute;left:50%;top:50%;margin-left:-10.5px;margin-top:-9.0px"><path d="M10 1 L1 9 L10 17 L10 12.500 L20 12.500 L20 5.500 L10 5.500 Z" fill="#7db0ea" stroke="#2f6fc0" stroke-width="1.4" stroke-linejoin="round"/></svg></div>
<div class="btn" style="left:1194px;top:772px;width:37px;height:27px"><svg width="21" height="18" viewBox="0 0 21 18" style="position:absolute;left:50%;top:50%;margin-left:-10.5px;margin-top:-9.0px"><path d="M11 1 L20 9 L11 17 L11 12.500 L1 12.500 L1 5.500 L11 5.500 Z" fill="#7db0ea" stroke="#2f6fc0" stroke-width="1.4" stroke-linejoin="round"/></svg></div>
<div class="a" style="left:386px;top:784.500px;width:788px;height:3px;background:#858585"></div>
<svg class="a" style="left:373px;top:776px" width="14" height="20" viewBox="0 0 14 20"><path d="M1.500 1.500 H12.500 V12 L7 18.500 L1.500 12 Z" fill="#fafafa" stroke="#a0a0a0" stroke-width="1.3"/></svg>
<div class="pin" style="left:1243px;top:772px;width:87px;height:27px;line-height:24px;border:1.500px solid #8a8a8a;padding-right:6px">1</div>
<div class="pl" style="left:1342px;top:776px">/ 0</div>
<div class="btn" id="b1" style="left:324px;top:812px;width:140px;height:24.500px;line-height:23.500px">Store Configuration</div>
<div class="btn" id="b2" style="left:477px;top:812px;width:155px;height:24.500px;line-height:23.500px">Snap to Configuration</div>
<div class="btn" style="left:1293px;top:812px;width:37px;height:25px"><svg width="16" height="16" viewBox="0 0 16 16" style="position:absolute;left:8px;top:3px"><path d="M2 4.500 H14 M6 4 V2.500 H10 V4" fill="none" stroke="#777" stroke-width="1.3"/><path d="M3.500 6 H12.500 L11.800 14.500 H4.200 Z" fill="#e8e8e8" stroke="#777" stroke-width="1.3"/><path d="M6.500 8 V12.500 M9.500 8 V12.500" stroke="#777" stroke-width="1"/></svg></div>
<div class="a" style="left:324px;top:849.500px;width:1006px;height:234.500px;background:#fff;border:1.500px solid #666"></div>
<div class="a" style="left:325.500px;top:851px;width:1003px;height:32.500px;background:#f7f7f7;border-bottom:2px solid #5a5a5a"></div>
<div class="a" style="left:445px;top:851px;width:1.5px;height:30px;background:#6e6e6e"></div>
<div class="a" style="left:579px;top:851px;width:1.5px;height:30px;background:#6e6e6e"></div>
<div class="pl" style="left:329px;top:858px;font-weight:bold">Configuration</div>
<div class="pl" style="left:450px;top:858px;font-weight:bold">Collision Status</div>
<div class="pl" style="left:584px;top:858px;font-weight:bold">Value</div>
<div class="btn" style="left:1342px;top:1011px;width:50px;height:30px"><svg width="18" height="20" viewBox="0 0 18 20" style="position:absolute;left:50%;top:50%;margin-left:-9.0px;margin-top:-10.0px"><path d="M9 1 L1 10 L5.500 10 L5.500 19 L12.500 19 L12.500 10 L17 10 Z" fill="#7db0ea" stroke="#2f6fc0" stroke-width="1.4" stroke-linejoin="round"/></svg></div>
<div class="btn" style="left:1342px;top:1054px;width:50px;height:30px"><svg width="18" height="20" viewBox="0 0 18 20" style="position:absolute;left:50%;top:50%;margin-left:-9.0px;margin-top:-10.0px"><path d="M9 19 L1 10 L5.500 10 L5.500 1 L12.500 1 L12.500 10 L17 10 Z" fill="#7db0ea" stroke="#2f6fc0" stroke-width="1.4" stroke-linejoin="round"/></svg></div>
<div class="a" id="stat" style="left:797px;top:1103px;font-size:14.8px;line-height:18px;color:#222;white-space:nowrap">Current Configuration: Not Stored &lt;[-55.30 175.60 146.21 -271.24 -66.26 -26.09 0.00 ]&gt;</div>
<svg class="a" style="left:1383px;top:1106px" width="14" height="12" viewBox="0 0 14 12"><path d="M0 0 H14 L7 8 Z" fill="#9a9a9a"/><rect x="0" y="10" width="14" height="2" fill="#9a9a9a"/></svg>
<div class="a" style="left:1404.200px;top:187px;width:1.600px;height:938px;background:#666"></div>
</div>
<!-- RIGHT -->
<div id="right">
<div class="hdr" style="left:1406px;top:187px;width:308px;height:28px;border-bottom:1.5px solid #c6c6c6"></div>
<div class="a" id="sih" style="left:1415.500px;top:192px;font-size:16px;line-height:20px;color:#222;white-space:nowrap">Scene Inspector</div>
<svg class="a" style="left:1685px;top:194px" width="13" height="13" viewBox="0 0 13 13"><circle cx="6.5" cy="6.5" r="6" fill="#9a9a9a"/><path d="M3.200 4.500 L9.800 4.500 L6.500 9.500 Z" fill="#fff"/></svg>
<div class="a" style="left:1418px;top:228px;width:284px;height:497px;border:2px solid #7e7e7e"></div>
<div class="a" style="left:1418px;top:228px;width:284px;height:25.500px;border:2px solid #7e7e7e;background:#f1f1f1"></div>
<div class="pl" style="left:1422px;top:232px">Properties</div>
<div class="pl" style="left:1443px;top:279px">Name</div>
<div class="pl" style="left:1566px;top:279px">toolStationBase</div>
<div class="pl" style="left:1443px;top:312px">Type</div>
<div class="pl" style="left:1566px;top:312px">collisionBox</div>
<div class="pl" style="left:1443px;top:345px">Box X (m)</div>
<div class="pl" style="left:1566px;top:345px">0.10</div>
<div class="pl" style="left:1443px;top:378px">Box Y (m)</div>
<div class="pl" style="left:1566px;top:378px">0.10</div>
<div class="pl" style="left:1443px;top:411px">Box Z (m)</div>
<div class="pl" style="left:1566px;top:411px">0.40</div>
<div class="pl" style="left:1456px;top:481px">X (m)</div>
<div class="pl" style="left:1529px;top:481px">Y (m)</div>
<div class="pl" style="left:1602px;top:481px">Z (m)</div>
<div class="pin" style="left:1456px;top:513px;width:61px;height:27px;line-height:23px">0</div>
<div class="pin" style="left:1529px;top:513px;width:61px;height:27px;line-height:23px">0.4</div>
<div class="pin" style="left:1603px;top:513px;width:61px;height:27px;line-height:23px">0.2</div>
<div class="pl" style="left:1456px;top:582px">Euler X (deg)</div>
<div class="pin" style="left:1566px;top:578px;width:98px;height:27px;line-height:23px">-0</div>
<div class="pl" style="left:1456px;top:623px">Euler Y (deg)</div>
<div class="pin" style="left:1566px;top:619px;width:98px;height:27px;line-height:23px">0</div>
<div class="pl" style="left:1456px;top:663px">Euler Z (deg)</div>
<div class="pin" style="left:1566px;top:659px;width:98px;height:27px;line-height:23px">0</div>
<div class="a" style="left:1418px;top:738px;width:284px;height:239px;border:2px solid #7e7e7e"></div>
<div class="a" style="left:1418px;top:738px;width:284px;height:25.500px;border:2px solid #7e7e7e;background:#f1f1f1"></div>
<div class="pl" style="left:1422px;top:740.700px">States</div>
<div class="pl" style="left:1443px;top:789px">Body Collision Status</div>
<div class="pl" style="left:1443px;top:822px">IN COLLISION</div>
<div class="pl" style="left:1443px;top:855px">Known Collisions</div>
<div class="a" style="left:1444px;top:887px;width:160px;height:24px;background:#c0c0c0;border:1.5px solid #8a8a8a;font-size:14.8px;line-height:21px;padding-left:4px;color:#1a1a1a">upper_arm_link</div>
<div class="btn" id="b3" style="left:1444px;top:924px;width:160px;height:28px;line-height:25.500px">Inspect Selected Body</div>
</div>
<div id="callout"><div class="a" style="left:668px;top:440px;width:150px;height:9px;background:#4472c4"></div>
<svg class="a" style="left:814px;top:428px" width="32" height="32"><path d="M2 2.500 L30.500 16.500 L2 30 Z" fill="#4472c4"/></svg>
<div class="a" style="left:136px;top:367px;width:533px;height:154px;background:rgba(255,255,255,0.86);border:2px solid #4472c4"></div>
<div class="a" id="co1" style="left:136px;top:377.5px;width:533px;text-align:center;font-size:33.500px;letter-spacing:0.550px;line-height:45px;color:#4270c2;white-space:nowrap">Highlighted end effector body</div>
<div class="a" id="co2" style="left:136px;top:421.8px;width:533px;text-align:center;font-size:33.500px;letter-spacing:0.550px;line-height:45px;color:#4270c2;white-space:nowrap">must stay inside bounded region</div>
<div class="a" id="co3" style="left:136px;top:466px;width:533px;text-align:center;font-size:33.500px;letter-spacing:0.550px;line-height:45px;color:#4270c2;white-space:nowrap">previewed by dashed prism</div></div>
<div class="a" style="left:310.200px;top:1096px;width:1.600px;height:29px;background:#666"></div><div class="a" style="left:1404.200px;top:1096px;width:1.600px;height:29px;background:#666"></div>
<!-- window border -->
<div class="a" style="left:1712.500px;top:0;width:1.500px;height:1125px;background:#555"></div>
<div class="a" style="left:0;top:1124px;width:1714px;height:1px;background:#333"></div>
<div class="a" style="left:0;top:0;width:1714px;height:1px;background:#333"></div>
<div class="a" style="left:0;top:0;width:1px;height:1125px;background:#333"></div>
</div></body></html>
